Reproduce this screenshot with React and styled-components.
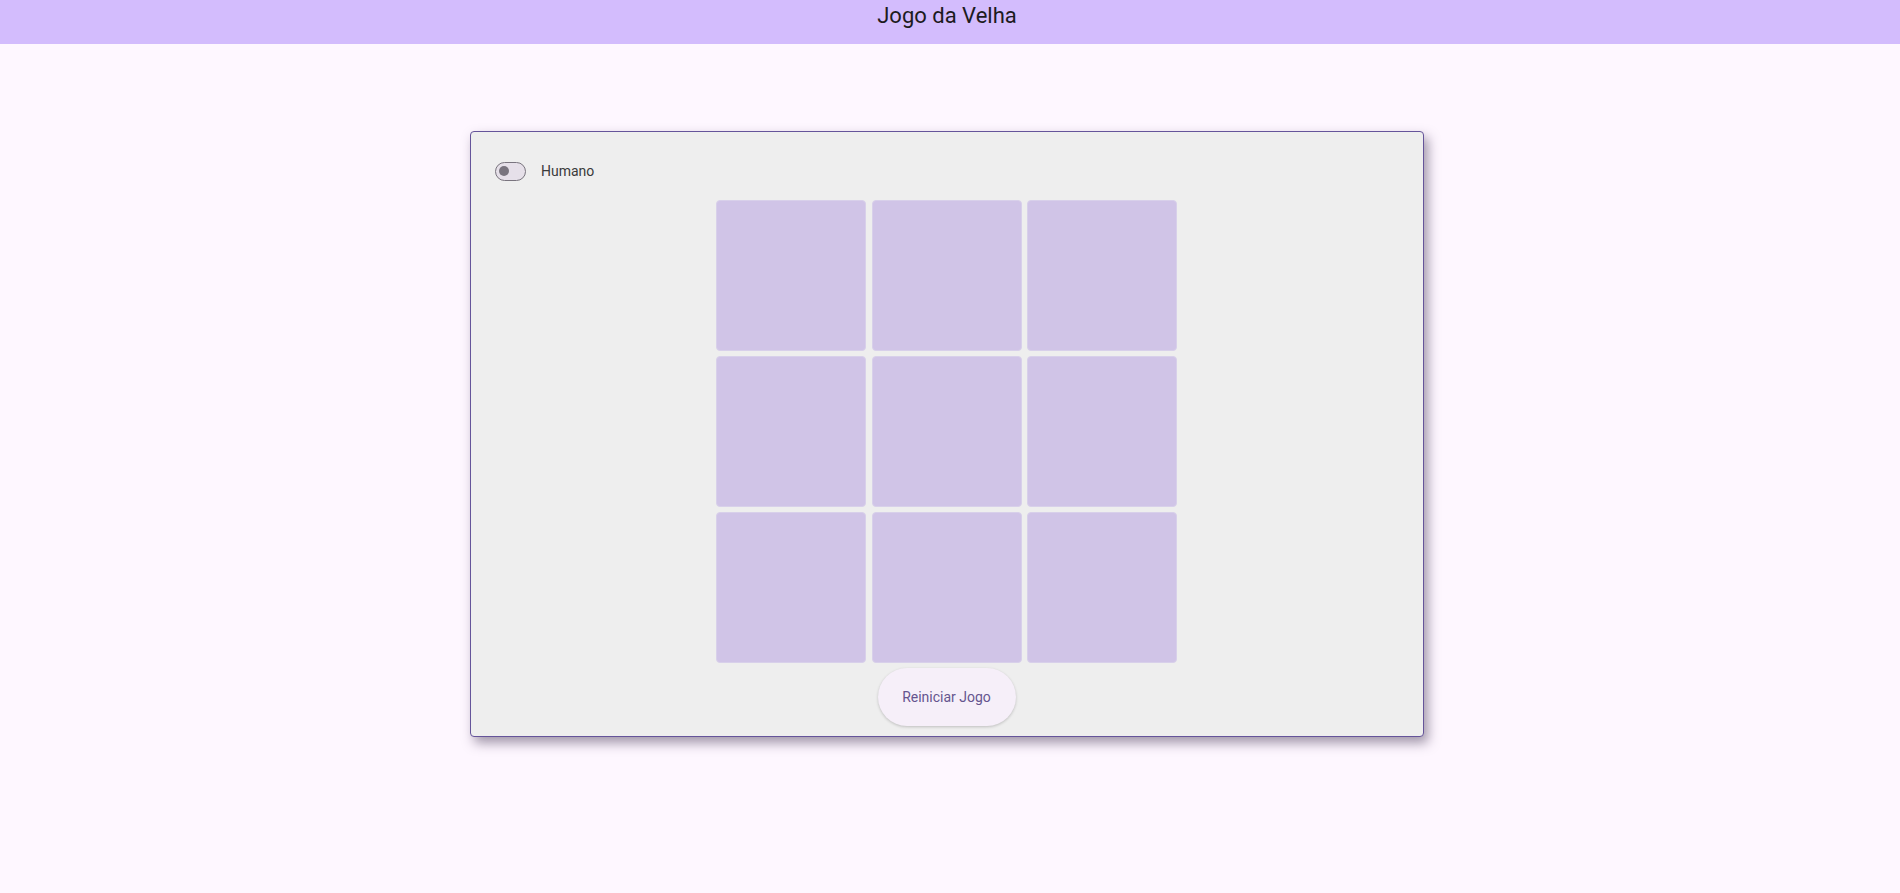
import React, { useState } from "react";
import styled, { createGlobalStyle } from "styled-components";

const GlobalStyle = createGlobalStyle`
  html, body {
    margin: 0;
    padding: 0;
    background: #fef7ff;
    font-family: Roboto, "Noto Sans", sans-serif;
  }
`;

const Page = styled.div`
  min-height: 893px;
  background: #fef7ff;
`;

const Header = styled.header`
  height: 44px;
  box-sizing: border-box;
  padding: 2px 6px 0 0;
  background: #d3bcfd;
  text-align: center;
`;

const Title = styled.h1`
  margin: 0;
  font-size: 22px;
  line-height: 28px;
  font-weight: 400;
  color: #1d1b20;
`;

const Main = styled.main`
  display: flex;
  justify-content: center;
  padding: 87px 6px 0 0;
`;

const Card = styled.section`
  width: 954px;
  box-sizing: border-box;
  padding: 29px 25px 10px 24px;
  background: #eeeeee;
  border: 1px solid #65549a;
  border-radius: 4px;
  box-shadow: 4px 6px 12px rgba(70, 55, 85, 0.5);
  display: flex;
  flex-direction: column;
  align-items: center;
`;

const ToggleRow = styled.label`
  align-self: flex-start;
  display: flex;
  align-items: center;
  gap: 15px;
  height: 20px;
  cursor: pointer;
`;

const Track = styled.span`
  width: 31px;
  height: 19px;
  box-sizing: border-box;
  border: 1.5px solid #79747e;
  border-radius: 10px;
  background: #e6e0e9;
  display: flex;
  align-items: center;
  justify-content: ${(p) => (p.$on ? "flex-end" : "flex-start")};
  padding: 0 3px;
`;

const Thumb = styled.span`
  width: 10px;
  height: 10px;
  border-radius: 50%;
  background: #79747e;
`;

const Label = styled.span`
  font-size: 14px;
  color: #3a3a3a;
`;

const Board = styled.div`
  margin-top: 19px;
  display: grid;
  grid-template-columns: repeat(3, 150px);
  grid-auto-rows: 150.5px;
  gap: 5.5px;
`;

const Cell = styled.button`
  border: 1px solid #d8d0ea;
  border-radius: 4px;
  background: #d0c4e7;
  padding: 0;
  font-family: Roboto, sans-serif;
  font-size: 64px;
  color: #4f378b;
  cursor: pointer;
`;

const ResetButton = styled.button`
  margin-top: 5px;
  width: 138px;
  height: 58px;
  border: none;
  border-radius: 29px;
  background: #f6eff9;
  color: #65558f;
  font-family: Roboto, sans-serif;
  font-size: 14px;
  box-shadow: 0 1px 3px rgba(0, 0, 0, 0.2);
  cursor: pointer;
`;

export default function App() {
  const [cells, setCells] = useState(Array(9).fill(""));
  const [turn, setTurn] = useState("X");
  const [computer, setComputer] = useState(false);

  const play = (i) => {
    if (cells[i]) return;
    const next = cells.slice();
    next[i] = turn;
    setCells(next);
    setTurn(turn === "X" ? "O" : "X");
  };

  return (
    <Page>
      <GlobalStyle />
      <Header>
        <Title>Jogo da Velha</Title>
      </Header>
      <Main>
        <Card>
          <ToggleRow onClick={() => setComputer(!computer)}>
            <Track $on={computer}>
              <Thumb />
            </Track>
            <Label>{computer ? "Computador" : "Humano"}</Label>
          </ToggleRow>
          <Board>
            {cells.map((c, i) => (
              <Cell key={i} onClick={() => play(i)}>
                {c}
              </Cell>
            ))}
          </Board>
          <ResetButton onClick={() => { setCells(Array(9).fill("")); setTurn("X"); }}>
            Reiniciar Jogo
          </ResetButton>
        </Card>
      </Main>
    </Page>
  );
}
